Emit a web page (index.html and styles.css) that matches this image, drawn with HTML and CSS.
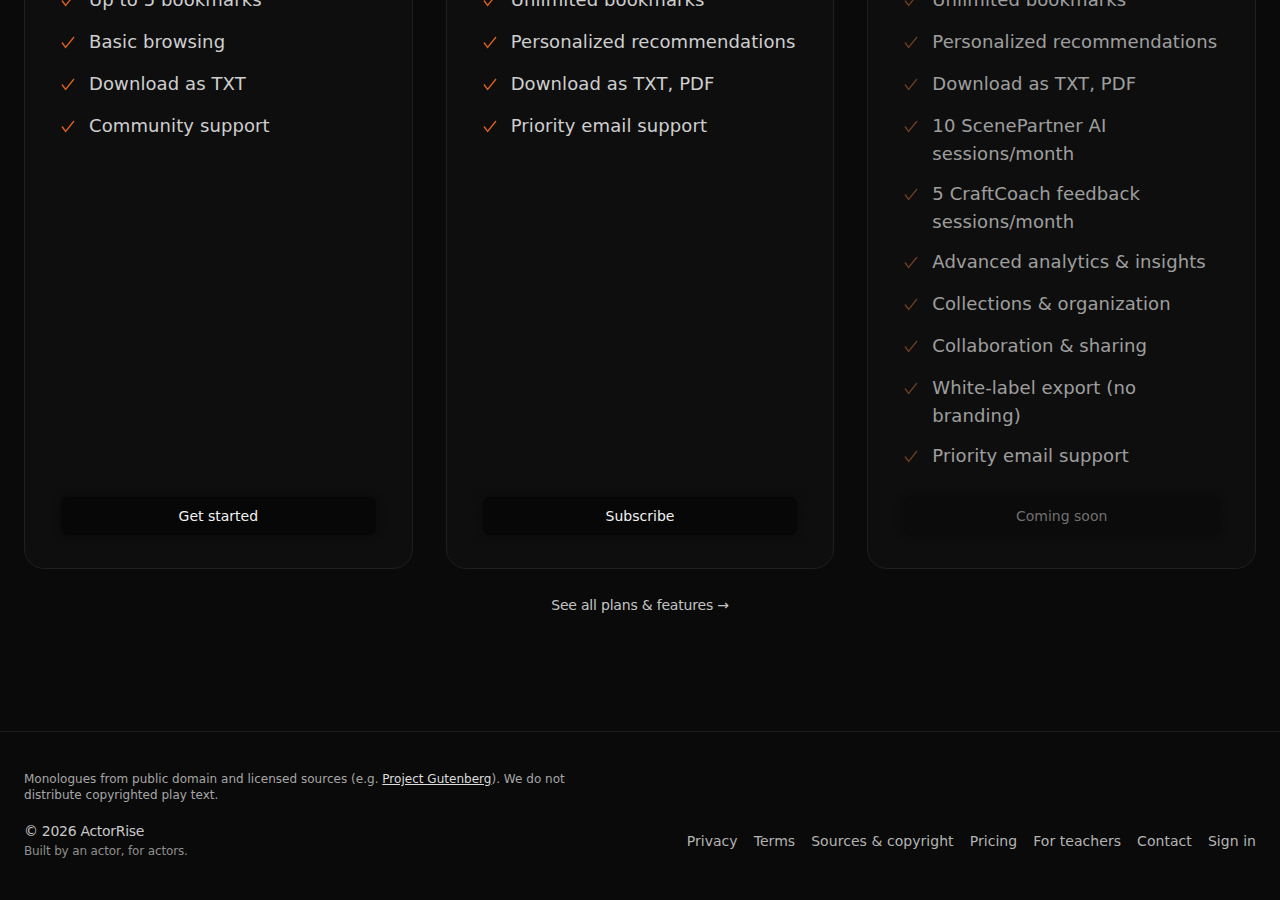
FILE: index.html
```html
<!DOCTYPE html>
<html lang="en">
<head>
  <meta charset="UTF-8">
  <meta name="viewport" content="width=device-width, initial-scale=1.0">
  <title>Pricing – ActorRise</title>
  <link rel="stylesheet" href="styles.css">
</head>
<body>
  <main>
    <section class="plans">
      <div class="plan-card">
        <ul class="features">
          <li><svg class="check" viewBox="0 0 14 14"><path d="M1 6.5 L4.6 11.5 L13 1"/></svg><span>Up to 5 bookmarks</span></li>
          <li><svg class="check" viewBox="0 0 14 14"><path d="M1 6.5 L4.6 11.5 L13 1"/></svg><span>Basic browsing</span></li>
          <li><svg class="check" viewBox="0 0 14 14"><path d="M1 6.5 L4.6 11.5 L13 1"/></svg><span>Download as TXT</span></li>
          <li><svg class="check" viewBox="0 0 14 14"><path d="M1 6.5 L4.6 11.5 L13 1"/></svg><span>Community support</span></li>
        </ul>
        <button class="plan-btn">Get started</button>
      </div>

      <div class="plan-card">
        <ul class="features">
          <li><svg class="check" viewBox="0 0 14 14"><path d="M1 6.5 L4.6 11.5 L13 1"/></svg><span>Unlimited bookmarks</span></li>
          <li><svg class="check" viewBox="0 0 14 14"><path d="M1 6.5 L4.6 11.5 L13 1"/></svg><span>Personalized recommendations</span></li>
          <li><svg class="check" viewBox="0 0 14 14"><path d="M1 6.5 L4.6 11.5 L13 1"/></svg><span>Download as TXT, PDF</span></li>
          <li><svg class="check" viewBox="0 0 14 14"><path d="M1 6.5 L4.6 11.5 L13 1"/></svg><span>Priority email support</span></li>
        </ul>
        <button class="plan-btn">Subscribe</button>
      </div>

      <div class="plan-card soon">
        <ul class="features">
          <li><svg class="check" viewBox="0 0 14 14"><path d="M1 6.5 L4.6 11.5 L13 1"/></svg><span>Unlimited bookmarks</span></li>
          <li><svg class="check" viewBox="0 0 14 14"><path d="M1 6.5 L4.6 11.5 L13 1"/></svg><span>Personalized recommendations</span></li>
          <li><svg class="check" viewBox="0 0 14 14"><path d="M1 6.5 L4.6 11.5 L13 1"/></svg><span>Download as TXT, PDF</span></li>
          <li><svg class="check" viewBox="0 0 14 14"><path d="M1 6.5 L4.6 11.5 L13 1"/></svg><span>10 ScenePartner AI sessions/month</span></li>
          <li><svg class="check" viewBox="0 0 14 14"><path d="M1 6.5 L4.6 11.5 L13 1"/></svg><span>5 CraftCoach feedback sessions/month</span></li>
          <li><svg class="check" viewBox="0 0 14 14"><path d="M1 6.5 L4.6 11.5 L13 1"/></svg><span>Advanced analytics &amp; insights</span></li>
          <li><svg class="check" viewBox="0 0 14 14"><path d="M1 6.5 L4.6 11.5 L13 1"/></svg><span>Collections &amp; organization</span></li>
          <li><svg class="check" viewBox="0 0 14 14"><path d="M1 6.5 L4.6 11.5 L13 1"/></svg><span>Collaboration &amp; sharing</span></li>
          <li><svg class="check" viewBox="0 0 14 14"><path d="M1 6.5 L4.6 11.5 L13 1"/></svg><span>White-label export (no branding)</span></li>
          <li><svg class="check" viewBox="0 0 14 14"><path d="M1 6.5 L4.6 11.5 L13 1"/></svg><span>Priority email support</span></li>
        </ul>
        <button class="plan-btn" disabled>Coming soon</button>
      </div>
    </section>

    <div class="all-plans">
      <a href="#">See all plans &amp; features →</a>
    </div>
  </main>

  <footer>
    <p class="sources">Monologues from public domain and licensed sources (e.g. <a href="#">Project Gutenberg</a>). We do not distribute copyrighted play text.</p>
    <div class="footer-bottom">
      <div class="brand">
        <div class="copy">© 2026 ActorRise</div>
        <div class="tagline">Built by an actor, for actors.</div>
      </div>
      <nav class="footer-links">
        <a href="#">Privacy</a>
        <a href="#">Terms</a>
        <a href="#">Sources &amp; copyright</a>
        <a href="#">Pricing</a>
        <a href="#">For teachers</a>
        <a href="#">Contact</a>
        <a href="#">Sign in</a>
      </nav>
    </div>
  </footer>
</body>
</html>
```

FILE: styles.css
```css
body {
  margin: 0;
  padding: 0;
  background-color: #0a0a0a;
  color: #cfcfcf;
  font-family: "DejaVu Sans", "Open Sans", sans-serif;
}
a {
  color: inherit;
  text-decoration: none;
}
main {
  padding: 0 24px;
}
.plans {
  display: grid;
  grid-template-columns: repeat(3, 1fr);
  gap: 33px;
  margin-top: -51px;
}
.plan-card {
  display: flex;
  flex-direction: column;
  background-color: #0e0e0e;
  border: 1px solid #1f1f1f;
  border-radius: 20px;
  padding: 36px 36px 33px;
}
.features {
  list-style: none;
  margin: 0 0 25px;
  padding: 0;
  display: flex;
  flex-direction: column;
  gap: 12px;
}
.features li {
  display: flex;
  gap: 14px;
  min-height: 30px;
  font-size: 18px;
  line-height: 28px;
  letter-spacing: 0.1px;
}
.check {
  flex: none;
  width: 14px;
  height: 14px;
  margin-top: 8px;
  fill: none;
  stroke: #e2621c;
  stroke-width: 1.3;
}
.soon .features {
  opacity: 0.75;
}
.soon .check {
  stroke: #b8652c;
  opacity: 0.75;
}
.plan-btn {
  margin-top: auto;
  height: 38px;
  border: none;
  border-radius: 8px;
  background-color: #070707;
  box-shadow: 0 0 10px rgba(0, 0, 0, 0.45);
  color: #f2f2f2;
  font-family: inherit;
  font-size: 14px;
  font-weight: 500;
  cursor: pointer;
}
.plan-btn:disabled {
  color: #707070;
  background-color: #0b0b0b;
  cursor: default;
}
.all-plans {
  text-align: center;
  margin-top: 26px;
  height: 136px;
}
.all-plans a {
  font-size: 14px;
  line-height: 20px;
  color: #c4c4c4;
  letter-spacing: -0.2px;
}
footer {
  border-top: 1px solid #1c1c1c;
  padding: 39px 24px 41px;
}
.sources {
  margin: 0 0 18px;
  max-width: 560px;
  font-size: 12px;
  line-height: 16px;
  color: #a6a6a6;
  letter-spacing: 0.02px;
}
.sources a {
  color: #dcdcdc;
  text-decoration: underline;
}
.footer-bottom {
  display: flex;
  justify-content: space-between;
  align-items: center;
}
.copy {
  font-size: 14px;
  line-height: 20px;
  color: #c8c8c8;
  letter-spacing: -0.3px;
}
.tagline {
  font-size: 12px;
  line-height: 18px;
  color: #8f8f8f;
  letter-spacing: -0.15px;
  margin-top: 1px;
}
.footer-links {
  display: flex;
  gap: 16px;
}
.footer-links a {
  font-size: 14px;
  line-height: 20px;
  color: #b4b4b4;
  letter-spacing: 0.05px;
}
```
